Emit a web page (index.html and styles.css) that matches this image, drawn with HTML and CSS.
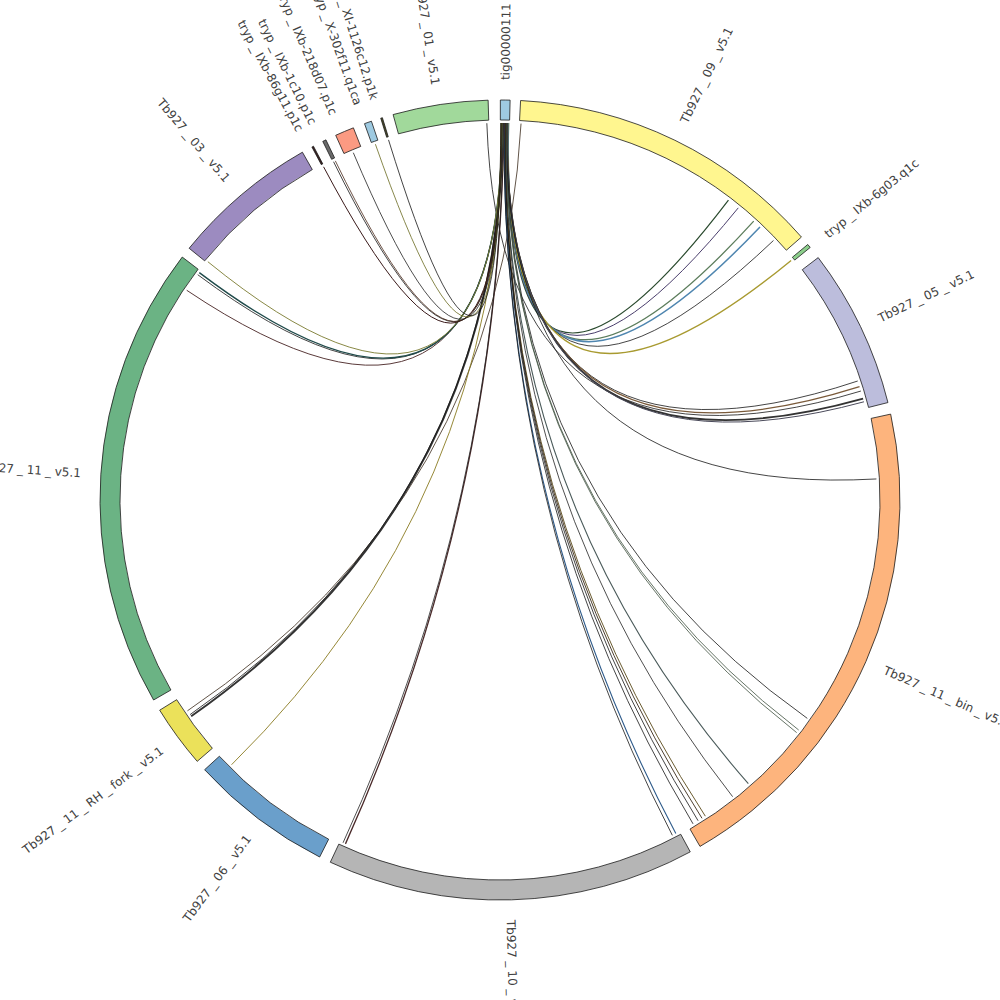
FILE: index.html
```html
<!DOCTYPE html>
<html lang="en">
<head>
<meta charset="utf-8">
<title>Circos plot</title>
<link rel="stylesheet" href="styles.css">
</head>
<body>
<div class="chart">
  <svg id="circos" class="circos" width="1000" height="1000" viewBox="0 0 1000 1000" xmlns="http://www.w3.org/2000/svg"></svg>
</div>
<script src="script.js"></script>
</body>
</html>
```

FILE: styles.css
```css
html, body {
  margin: 0;
  padding: 0;
  background: #ffffff;
}

.chart {
  width: 1000px;
  height: 1000px;
  overflow: hidden;
}

.circos {
  display: block;
}

.seg {
  stroke: #1b1b1b;
  stroke-width: 0.8;
  stroke-linejoin: miter;
}

.chord {
  fill: none;
  stroke-linecap: butt;
}

.label {
  font-family: "DejaVu Sans", Verdana, sans-serif;
  font-size: 12px;
  fill: #414141;
}
```

FILE: script.js
```js
(function () {
  var NS = 'http://www.w3.org/2000/svg';
  var svg = document.getElementById('circos');
  var C = 500, RI = 380, RO = 400, RT = 420, RL = 377;

  function rad(d) { return d * Math.PI / 180; }
  function pt(r, d) { return [C + r * Math.sin(rad(d)), C - r * Math.cos(rad(d))]; }
  function f(n) { return n.toFixed(2); }
  function el(name, attrs, parent) {
    var e = document.createElementNS(NS, name);
    for (var k in attrs) e.setAttribute(k, attrs[k]);
    (parent || svg).appendChild(e);
    return e;
  }

  var segs = [
    { n: 'tig00000111', a: 0.05, b: 1.45, c: '#9ecae1', l: 0.7 },
    { n: 'Tb927_09_v5.1', a: 2.95, b: 48.9, c: '#fff68f' },
    { n: 'tryp_IXb-6g03.q1c', a: 50.3, b: 50.85, c: '#8ccf8c', l: 50.9 },
    { n: 'Tb927_05_v5.1', a: 52.7, b: 75.9, c: '#bcbddc', l: 64.4 },
    { n: 'Tb927_11_bin_v5.1', a: 77.6, b: 150.0, c: '#fdb47d', l: 113.8 },
    { n: 'Tb927_10_v5.1', a: 151.6, b: 205.1, c: '#b5b5b5', l: 178.5 },
    { n: 'Tb927_06_v5.1', a: 206.8, b: 227.6, c: '#6a9fcb', l: 216.8 },
    { n: 'Tb927_11_RH_fork_v5.1', a: 229.2, b: 238.3, c: '#ebe15a', l: 233.6 },
    { n: 'Tb927_11_v5.1', a: 240.0, b: 307.4, c: '#6bb384', l: 273.7 },
    { n: 'Tb927_03_v5.1', a: 309.0, b: 330.4, c: '#9c8bc0', l: 319.6 },
    { n: 'tryp_IXb-86g11.p1c', a: 331.95, b: 332.2, c: '#3a2020', l: 331.6 },
    { n: 'tryp_IXb-1c10.p1c', a: 333.7, b: 334.2, c: '#6a6a6a', l: 333.6 },
    { n: 'tryp_IXb-218d07.p1c', a: 335.75, b: 338.5, c: '#fb9a82', l: 336.7 },
    { n: 'tryp_X-302f11.q1ca', a: 340.2, b: 341.25, c: '#9ecae1', l: 340.3 },
    { n: 'tryp_XI-1126c12.p1k', a: 342.65, b: 342.9, c: '#4a4a28', l: 342.6 },
    { n: 'Tb927_01_v5.1', a: 344.5, b: 358.3, c: '#a1d99b', l: 351.2 }
  ];

  // chords from tig00000111 to [target angle, colour, width]
  var tigChords = [
    [37.3, '#2a4a2e', 1.2],
    [39.2, '#4a3e6c', 1.0],
    [42.3, '#5c7d5c', 1.3],
    [43.6, '#4f86b0', 1.5],
    [46.5, '#151515', 0.8],
    [50.55, '#a89a30', 1.4],
    [71.6, '#151515', 0.8],
    [72.5, '#7a5a3a', 1.3],
    [74.4, '#333333', 1.9],
    [74.9, '#4a4a5a', 1.0],
    [86.8, '#151515', 0.8],
    [125.4, '#151515', 0.8],
    [127.6, '#3f503f', 0.8],
    [128.1, '#3f503f', 0.8],
    [138.8, '#4a5a5a', 1.1],
    [141.9, '#222222', 0.8],
    [147.0, '#5a4a1a', 0.9],
    [147.6, '#3a2a1a', 0.9],
    [148.3, '#151515', 0.8],
    [149.2, '#151515', 0.8],
    [152.2, '#2d5a8a', 1.1],
    [152.8, '#151515', 0.8],
    [204.2, '#4a2a2a', 1.3],
    [204.6, '#222222', 0.8],
    [225.4, '#8a7a20', 0.9],
    [235.0, '#333333', 2.0],
    [235.3, '#151515', 0.8],
    [303.8, '#5a3a3a', 1.0],
    [306.7, '#151515', 0.8],
    [307.1, '#1f4a4a', 1.4],
    [309.2, '#7a7a30', 0.9],
    [332.1, '#3a1a1a', 1.0],
    [333.8, '#151515', 0.8],
    [334.1, '#4a2a1a', 0.8],
    [337.1, '#222222', 0.8],
    [340.7, '#6a6a20', 0.8],
    [342.8, '#151515', 0.8]
  ];

  var otherChords = [
    [358.0, 73.2, '#151515', 0.8],
    [3.2, 236.0, '#3a2a1a', 0.8]
  ];

  var gChords = el('g', { 'class': 'chords' });
  var gSegs = el('g', { 'class': 'segments' });
  var gLabels = el('g', { 'class': 'labels' });

  function chord(a, b, color, w) {
    var p = pt(RL, a), q = pt(RL, b);
    el('path', {
      'class': 'chord',
      d: 'M' + f(p[0]) + ',' + f(p[1]) + ' Q' + C + ',' + C + ' ' + f(q[0]) + ',' + f(q[1]),
      stroke: color,
      'stroke-width': w
    }, gChords);
  }

  otherChords.forEach(function (c) { chord(c[0], c[1], c[2], c[3]); });
  var N = tigChords.length;
  tigChords.forEach(function (c, i) {
    var ta = 1.32 - 1.2 * i / (N - 1);
    chord(ta, c[0], c[1], c[2]);
  });

  segs.forEach(function (s) {
    var p1 = pt(RO, s.a), p2 = pt(RO, s.b), p3 = pt(RI, s.b), p4 = pt(RI, s.a);
    var large = (s.b - s.a) > 180 ? 1 : 0;
    var d = 'M' + f(p1[0]) + ',' + f(p1[1]) +
      ' A' + RO + ',' + RO + ' 0 ' + large + ' 1 ' + f(p2[0]) + ',' + f(p2[1]) +
      ' L' + f(p3[0]) + ',' + f(p3[1]) +
      ' A' + RI + ',' + RI + ' 0 ' + large + ' 0 ' + f(p4[0]) + ',' + f(p4[1]) + ' Z';
    el('path', { d: d, 'class': 'seg', fill: s.c }, gSegs);

    var L = (s.l !== undefined) ? s.l : (s.a + s.b) / 2;
    var left = L > 180;
    var tr = 'translate(' + C + ',' + C + ') rotate(' + f(L - 90) + ') translate(' + RT + ',0)';
    if (left) tr += ' rotate(180)';
    var t = el('text', {
      'class': 'label',
      transform: tr,
      'text-anchor': left ? 'end' : 'start',
      dy: '0.36em'
    }, gLabels);
    var parts = s.n.split('_');
    t.appendChild(document.createTextNode(parts[0]));
    for (var i = 1; i < parts.length; i++) {
      el('tspan', { dx: '3.4' }, t).textContent = '_';
      el('tspan', { dx: '3.4' }, t).textContent = parts[i];
    }
  });
})();
```
